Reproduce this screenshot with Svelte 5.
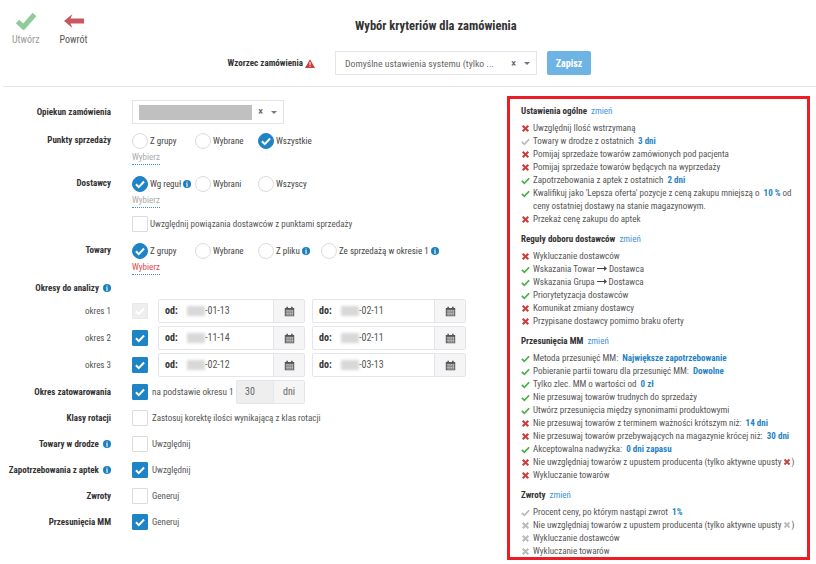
<script>
  const sections = [
    {
      title: "Ustawienia ogólne",
      items: [
        ["x", "Uwzględnij Ilość wstrzymaną"],
        ["off", "Towary w drodze z ostatnich ", "3 dni"],
        ["x", "Pomijaj sprzedaże towarów zamówionych pod pacjenta"],
        ["x", "Pomijaj sprzedaże towarów będących na wyprzedaży"],
        ["ok", "Zapotrzebowania z aptek z ostatnich ", "2 dni"],
        ["ok", "Kwalifikuj jako 'Lepsza oferta' pozycje z ceną zakupu mniejszą o ", "10 %", " od ceny ostatniej dostawy na stanie magazynowym."],
        ["x", "Przekaż cenę zakupu do aptek"]
      ]
    },
    {
      title: "Reguły doboru dostawców",
      items: [
        ["x", "Wykluczanie dostawców"],
        ["ok", "Wskazania Towar", "arrow", "Dostawca"],
        ["ok", "Wskazania Grupa", "arrow", "Dostawca"],
        ["ok", "Priorytetyzacja dostawców"],
        ["x", "Komunikat zmiany dostawcy"],
        ["x", "Przypisane dostawcy pomimo braku oferty"]
      ]
    },
    {
      title: "Przesunięcia MM",
      items: [
        ["ok", "Metoda przesunięć MM: ", "Największe zapotrzebowanie"],
        ["ok", "Pobieranie partii towaru dla przesunięć MM: ", "Dowolne"],
        ["ok", "Tylko zlec. MM o wartości od ", "0 zł"],
        ["ok", "Nie przesuwaj towarów trudnych do sprzedaży"],
        ["ok", "Utwórz przesunięcia między synonimami produktowymi"],
        ["x", "Nie przesuwaj towarów z terminem ważności krótszym niż: ", "14 dni"],
        ["x", "Nie przesuwaj towarów przebywających na magazynie krócej niż: ", "30 dni"],
        ["ok", "Akceptowalna nadwyżka: ", "0 dni zapasu"],
        ["x", "Nie uwzględniaj towarów z upustem producenta (tylko aktywne upusty", "tail-x"],
        ["x", "Wykluczanie towarów"]
      ]
    },
    {
      title: "Zwroty",
      items: [
        ["off", "Procent ceny, po którym nastąpi zwrot ", "1%"],
        ["offx", "Nie uwzględniaj towarów z upustem producenta (tylko aktywne upusty", "tail-offx"],
        ["offx", "Wykluczanie dostawców"],
        ["offx", "Wykluczanie towarów"]
      ]
    }
  ];

  const periods = [
    { name: "okres 1", from: "-01-13", to: "-02-11", disabled: true },
    { name: "okres 2", from: "-11-14", to: "-02-11" },
    { name: "okres 3", from: "-02-12", to: "-03-13" }
  ];

  const checks = [
    { label: "Klasy rotacji", text: "Zastosuj korektę ilości wynikającą z klas rotacji" },
    { label: "Towary w drodze", info: true, text: "Uwzględnij" },
    { label: "Zapotrzebowania z aptek", info: true, text: "Uwzględnij", on: true },
    { label: "Zwroty", text: "Generuj" },
    { label: "Przesunięcia MM", text: "Generuj", on: true }
  ];
</script>

{#snippet tick(cls)}
  <svg class={cls} viewBox="0 0 16 16"><path d="M1.500 8.500l4.500 4.500 8.500-9" fill="none" stroke="currentColor" stroke-width="3.200" /></svg>
{/snippet}

{#snippet cross(cls)}
  <svg class={cls} viewBox="0 0 16 16"><path d="M3 3l10 10M13 3L3 13" fill="none" stroke="currentColor" stroke-width="3.800" /></svg>
{/snippet}

{#snippet info()}
  <svg class="info" viewBox="0 0 16 16"><circle cx="8" cy="8" r="8" fill="#1b7fbd" /><path d="M6.200 6.600h3v5.200h1v1.400H6v-1.400h1V8H6.200zM7 2.800h2.200V5H7z" fill="#fff" /></svg>
{/snippet}

{#snippet radio(text, on, hasInfo)}
  <div class="radio-opt">
    <span class="radio" class:on>{#if on}{@render tick("mark")}{/if}</span>
    <span class="opt-text">{text}</span>
    {#if hasInfo}{@render info()}{/if}
  </div>
{/snippet}

{#snippet checkbox(on, disabled)}
  <span class="box" class:on class:disabled>{#if on || disabled}{@render tick("mark")}{/if}</span>
{/snippet}

{#snippet calendar()}
  <span class="addon cal">
    <svg viewBox="0 0 14 14"><path d="M1 2.500h12V13H1z" fill="#555" /><path d="M3 1h2v3H3zM9 1h2v3H9z" fill="#555" /><path d="M2 5.500h10M2 7.500h10M2 9.500h10M2 11.500h10M4 5v7M6.300 5v7M8.600 5v7M11 5v7" stroke="#ddd" stroke-width=".7" /></svg>
  </span>
{/snippet}

{#snippet dateInput(prefix, value)}
  <div class="group">
    <div class="date"><b>{prefix}</b><span class="smudge"></span><span>{value}</span></div>
    {@render calendar()}
  </div>
{/snippet}

<div class="page">
  <header>
    <nav>
      <div class="tool">
        <svg viewBox="0 0 22 18" class="tool-icon"><path d="M2.500 9.500l6 5.500 11-12.500" fill="none" stroke="#8fcb9b" stroke-width="5" /></svg>
        <span class="muted">Utwórz</span>
      </div>
      <div class="tool">
        <svg viewBox="0 0 22 18" class="tool-icon"><path d="M1 9l8.500-7-2 4.500H21v5H7.500l2 4.500z" fill="#c9565f" /></svg>
        <span>Powrót</span>
      </div>
    </nav>
    <div class="head-center">
      <h1>Wybór kryteriów dla zamówienia</h1>
      <div class="template">
        <span class="template-label">Wzorzec zamówienia</span>
        <svg class="warn" viewBox="0 0 16 14"><path d="M8 0l8 14H0z" fill="#c9403f" /><path d="M7.200 4.500h1.600v5H7.200zM7.200 10.500h1.600v1.800H7.200z" fill="#fff" /></svg>
        <div class="select wide">
          <span class="select-value">Domyślne ustawienia systemu (tylko ...</span>
          <span class="clear">×</span>
          <span class="caret"></span>
        </div>
        <button type="button">Zapisz</button>
      </div>
    </div>
  </header>

  <main>
    <form>
      <div class="row first">
        <span class="label tall">Opiekun zamówienia</span>
        <div class="select">
          <span class="grey-value"></span>
          <span class="clear">×</span>
          <span class="caret"></span>
        </div>
      </div>

      <div class="row punkty">
        <span class="label short">Punkty sprzedaży</span>
        <div>
          <div class="radios">
            {@render radio("Z grupy", false)}
            {@render radio("Wybrane", false)}
            {@render radio("Wszystkie", true)}
          </div>
          <span class="pick">Wybierz</span>
        </div>
      </div>

      <div class="row dostawcy">
        <span class="label short">Dostawcy</span>
        <div>
          <div class="radios">
            {@render radio("Wg reguł", true, true)}
            {@render radio("Wybrani", false)}
            {@render radio("Wszyscy", false)}
          </div>
          <span class="pick">Wybierz</span>
          <div class="check-line link-check">
            {@render checkbox(false)}
            <span class="radio-text">Uwzględnij powiązania dostawców z punktami sprzedaży</span>
          </div>
        </div>
      </div>

      <div class="row towary">
        <span class="label short">Towary</span>
        <div>
          <div class="radios">
            {@render radio("Z grupy", true)}
            {@render radio("Wybrane", false)}
            {@render radio("Z pliku", false, true)}
            {@render radio("Ze sprzedażą w okresie 1", false, true)}
          </div>
          <span class="pick error">Wybierz</span>
        </div>
      </div>

      <div class="row okresy">
        <span class="label">Okresy do analizy {@render info()}</span>
      </div>

      {#each periods as p}
        <div class="row period">
          <span class="label plain tall">{p.name}</span>
          <div class="period-fields">
            {@render checkbox(!p.disabled, p.disabled)}
            {@render dateInput("od:", p.from)}
            {@render dateInput("do:", p.to)}
          </div>
        </div>
      {/each}

      <div class="row period stock">
        <span class="label tall">Okres zatowarowania</span>
        <div class="period-fields">
          {@render checkbox(true)}
          <span class="stock-text">na podstawie okresu 1</span>
          <div class="group days">
            <span class="days-value">30</span>
            <span class="addon">dni</span>
          </div>
        </div>
      </div>

      {#each checks as c}
        <div class="row check-row">
          <span class="label">{c.label}{#if c.info}&nbsp;{@render info()}{/if}</span>
          <div class="check-line">
            {@render checkbox(c.on)}
            <span>{c.text}</span>
          </div>
        </div>
      {/each}
    </form>

    <aside>
      {#each sections as s}
        <section>
          <h2>{s.title} <a href="#top">zmień</a></h2>
          <ul>
            {#each s.items as it}
              <li>
                {#if it[0] === "x"}
                  {@render cross("li-icon red")}
                {:else if it[0] === "offx"}
                  {@render cross("li-icon grey")}
                {:else if it[0] === "ok"}
                  {@render tick("li-icon green")}
                {:else}
                  {@render tick("li-icon grey")}
                {/if}
                <span>
                  {#if it[2] === "arrow"}
                    {it[1]}<svg class="arrow" viewBox="0 0 12 6"><path d="M0 2.300h8.500V0L12 3 8.500 6V3.700H0z" fill="#444" /></svg>{it[3]}
                  {:else if it[2] === "tail-x"}
                    {it[1]} {@render cross("tail red")})
                  {:else if it[2] === "tail-offx"}
                    {it[1]} {@render cross("tail grey")})
                  {:else}
                    {it[1]}{#if it[2]}<b>{it[2]}</b>{/if}{#if it[3]}{it[3]}{/if}
                  {/if}
                </span>
              </li>
            {/each}
          </ul>
        </section>
      {/each}
    </aside>
  </main>
</div>

<style>
  :global(body) {
    background: #fff;
    font-family: "Roboto Condensed", "Liberation Sans Narrow", Roboto, "Liberation Sans", sans-serif;
    font-stretch: 75%;
    font-size: 9px;
    color: #444;
  }
  .page {
    width: 816px;
    height: 564px;
    overflow: hidden;
  }
  header {
    position: relative;
    height: 86px;
    margin-left: 3px;
    border-bottom: 1px solid #e4e4ec;
  }
  nav {
    position: absolute;
    left: 9px;
    top: 12px;
    display: flex;
    gap: 20px;
    font-size: 10px;
  }
  .tool {
    display: flex;
    flex-direction: column;
    align-items: center;
    gap: 4px;
    color: #555;
  }
  .tool-icon {
    width: 22px;
    height: 18px;
  }
  .muted {
    color: #999;
  }
  .head-center {
    display: flex;
    flex-direction: column;
  }
  h1 {
    margin: 18px 0 0 352px;
    font-size: 12.500px;
    line-height: 15px;
    font-weight: 700;
    color: #333;
  }
  .template {
    display: flex;
    align-items: center;
    margin-top: 18px;
  }
  .template-label {
    width: 300px;
    text-align: right;
    font-weight: 700;
    color: #333;
  }
  .warn {
    width: 10px;
    height: 9px;
    margin-left: 2px;
    margin-right: 20px;
  }
  .select {
    display: flex;
    align-items: center;
    box-sizing: border-box;
    width: 152px;
    height: 24px;
    padding: 0 6px;
    border: 1px solid #e4e4ec;
    background: #fff;
  }
  .select.wide {
    width: 202px;
    padding-left: 9px;
  }
  .select-value {
    flex: 1;
    font-size: 9.700px;
    color: #666;
    white-space: nowrap;
  }
  .grey-value {
    flex: 1;
    height: 15px;
    background: #c0c0c0;
  }
  .clear {
    margin: 0 8px 0 6px;
    font-size: 10px;
    font-weight: 700;
    color: #666;
  }
  .caret {
    width: 0;
    height: 0;
    border: 3px solid transparent;
    border-top-color: #777;
    border-bottom: 0;
  }
  button {
    margin-left: 10px;
    width: 44px;
    height: 24px;
    padding: 0;
    border: 0;
    border-radius: 2px;
    background: #6db3e3;
    color: #fff;
    font: inherit;
    font-size: 10px;
    font-weight: 700;
  }
  main {
    display: grid;
    grid-template-columns: 507px 303px;
    align-items: start;
  }
  form {
    padding-top: 13px;
  }
  .row {
    display: grid;
    grid-template-columns: 111px 1fr;
    column-gap: 21px;
    line-height: 16px;
  }
  .label {
    text-align: right;
    font-weight: 700;
    color: #333;
    white-space: nowrap;
  }
  .label.tall {
    line-height: 24px;
  }
  .label.short {
    line-height: 14px;
  }
  .label.plain {
    font-weight: 400;
    color: #555;
  }
  .punkty {
    margin-top: 9px;
  }
  .dostawcy {
    margin-top: 11px;
  }
  .towary {
    margin-top: 11px;
  }
  .okresy {
    margin-top: 5px;
  }
  .period {
    margin-top: 3px;
  }
  .radios {
    display: flex;
  }
  .radio-opt {
    display: flex;
    align-items: center;
    width: 63px;
    white-space: nowrap;
  }
  .radio {
    box-sizing: border-box;
    flex: none;
    width: 16px;
    height: 16px;
    margin-right: 2px;
    border: 1px solid #dcdcdc;
    border-radius: 50%;
    display: flex;
    align-items: center;
    justify-content: center;
    background: #fff;
  }
  .radio.on {
    background: #1f84c6;
    border-color: #1f84c6;
  }
  .mark {
    width: 10px;
    height: 10px;
    color: #fff;
  }
  .info {
    width: 8px;
    height: 8px;
    margin-left: 2px;
    vertical-align: -1px;
    flex: none;
  }
  .pick {
    display: inline-block;
    margin-top: 2px;
    line-height: 13px;
    color: #aaa;
    border-bottom: 1px dotted #3d8fd0;
  }
  .pick.error {
    color: #e2484d;
  }
  .box {
    box-sizing: border-box;
    flex: none;
    width: 16px;
    height: 16px;
    border: 1px solid #dcdcdc;
    background: #fff;
    border-radius: 1px;
    display: flex;
    align-items: center;
    justify-content: center;
  }
  .box.on {
    background: #1f84c6;
    border-color: #1f84c6;
  }
  .box.disabled {
    background: #eee;
    border-color: #e8e8e8;
  }
  .check-line {
    display: flex;
    align-items: center;
    gap: 4px;
    color: #555;
  }
  .link-check {
    margin-top: 8px;
    gap: 2px;
  }
  .check-row {
    margin-top: 10px;
  }
  .stock + .check-row {
    margin-top: 6px;
  }
  .period-fields {
    display: flex;
    align-items: center;
  }
  .group {
    display: flex;
    box-sizing: border-box;
    width: 147px;
    height: 24px;
    margin-left: 10px;
    border: 1px solid #e4e4ec;
    border-radius: 2px;
    overflow: hidden;
    font-size: 10px;
  }
  .group + .group {
    margin-left: 7px;
    width: 154px;
  }
  .date {
    flex: 1;
    display: flex;
    align-items: center;
    padding-left: 6px;
    color: #555;
  }
  .date b {
    width: 22px;
    color: #333;
  }
  .smudge {
    width: 18px;
    height: 10px;
    background: #d8d8d8;
    filter: blur(1.500px);
  }
  .addon {
    display: flex;
    align-items: center;
    justify-content: center;
    width: 30px;
    flex: none;
    background: #f5f5f5;
    border-left: 1px solid #e4e4ec;
    color: #666;
  }
  .cal svg {
    width: 11px;
    height: 11px;
  }
  .stock-text {
    margin-left: 4px;
    width: 84px;
    font-size: 9.200px;
    color: #555;
    white-space: nowrap;
  }
  .group.days {
    width: 69px;
    margin-left: 0;
    background: #eee;
  }
  .days-value {
    flex: 1;
    padding-left: 8px;
    line-height: 22px;
    color: #666;
  }
  aside {
    box-sizing: border-box;
    margin-top: 9px;
    height: 464px;
    padding: 6px 11px;
    border: 3px solid #ee1c25;
    background: #fff;
  }
  section + section {
    margin-top: 7px;
  }
  h2 {
    margin: 0;
    font-size: 9px;
    line-height: 13px;
    font-weight: 700;
    color: #333;
  }
  h2 a {
    margin-left: 2px;
    font-weight: 400;
    color: #3d93d6;
    text-decoration: none;
  }
  ul {
    margin: 4px 0 0;
    padding: 0;
    list-style: none;
  }
  li {
    display: flex;
    line-height: 13px;
    color: #555;
  }
  .li-icon {
    flex: none;
    width: 9px;
    height: 9px;
    margin: 2px 3px 0 0;
  }
  .tail {
    width: 8px;
    height: 8px;
    vertical-align: -1px;
  }
  .red {
    color: #c9403f;
  }
  .green {
    color: #4caf50;
  }
  .grey {
    color: #bbb;
  }
  li b {
    margin-left: 2px;
    color: #1f84c6;
  }
  .arrow {
    width: 10px;
    height: 5px;
    margin: 0 2px;
    vertical-align: 1px;
  }
</style>
